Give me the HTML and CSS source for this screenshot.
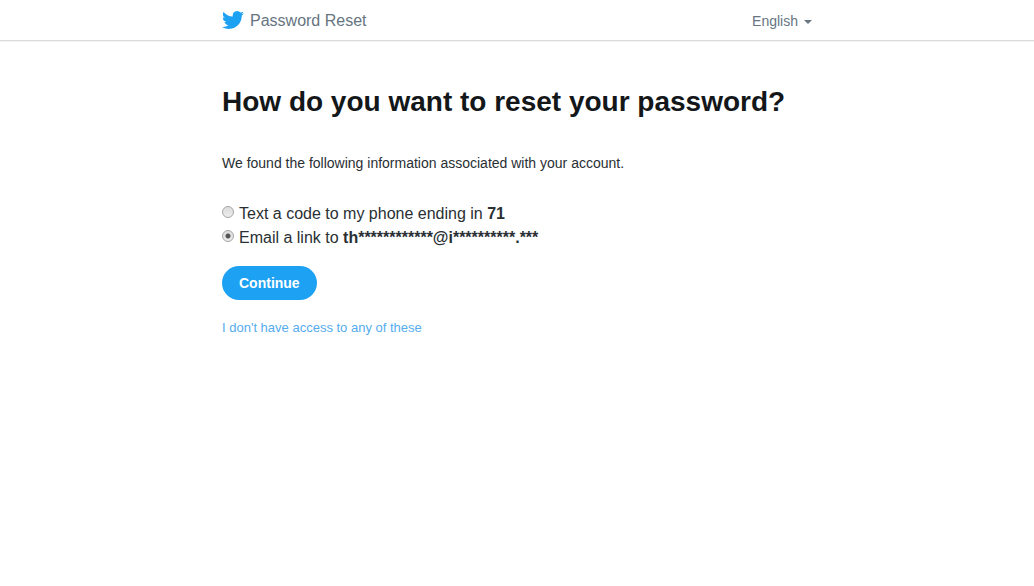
FILE: index.html
```html
<!DOCTYPE html>
<html lang="en">
<head>
<meta charset="utf-8">
<meta name="viewport" content="width=device-width, initial-scale=1">
<title>Password Reset</title>
<link rel="stylesheet" href="styles.css">
</head>
<body>
<header class="topbar">
  <div class="container topbar-inner">
    <div class="brand">
      <svg class="bird" viewBox="0 0 24 24" aria-hidden="true"><path d="M23.954 4.569a10 10 0 0 1-2.825.775 4.958 4.958 0 0 0 2.163-2.723c-.951.555-2.005.959-3.127 1.184a4.92 4.92 0 0 0-8.384 4.482C7.691 8.094 4.066 6.13 1.64 3.161a4.822 4.822 0 0 0-.666 2.475c0 1.71.87 3.213 2.188 4.096a4.904 4.904 0 0 1-2.228-.616v.061a4.923 4.923 0 0 0 3.946 4.827 4.996 4.996 0 0 1-2.212.085 4.937 4.937 0 0 0 4.604 3.417 9.868 9.868 0 0 1-6.102 2.105c-.39 0-.779-.023-1.17-.067a13.995 13.995 0 0 0 7.557 2.209c9.054 0 13.999-7.496 13.999-13.986 0-.209 0-.42-.015-.63a9.936 9.936 0 0 0 2.46-2.548z"/></svg>
      <span class="brand-title">Password Reset</span>
    </div>
    <button type="button" class="language" aria-haspopup="true">English<span class="caret"></span></button>
  </div>
</header>
<main class="container content">
  <h1 class="heading">How do you want to reset your password?</h1>
  <p class="intro">We found the following information associated with your account.</p>
  <form class="reset-form">
    <div class="options">
      <label class="option"><input class="radio" type="radio" name="method" value="phone"><span>Text a code to my phone ending in <strong>71</strong></span></label>
      <label class="option"><input class="radio" type="radio" name="method" value="email" checked><span>Email a link to <strong>th************@i**********.***</strong></span></label>
    </div>
    <button type="submit" class="continue">Continue</button>
  </form>
  <a class="no-access" href="#">I don't have access to any of these</a>
</main>
</body>
</html>
```
FILE: styles.css
```css
* {
  box-sizing: border-box;
}

body {
  margin: 0;
  background: #fff;
  color: #292f33;
  font-family: "Liberation Sans", Arial, sans-serif;
  font-size: 14px;
}

.container {
  width: 100%;
  max-width: 590px;
  margin: 0 auto;
}

.topbar {
  border-bottom: 1px solid #dadada;
  box-shadow: 0 1px 1px rgba(0, 0, 0, 0.04);
}

.topbar-inner {
  display: flex;
  align-items: center;
  justify-content: space-between;
  height: 40px;
}

.brand {
  display: flex;
  align-items: center;
  gap: 6px;
}

.bird {
  width: 22px;
  height: 22px;
  fill: #1da1f2;
}

.brand-title {
  padding-top: 2px;
  color: #66757f;
  font-size: 16px;
  line-height: 20px;
}

.language {
  display: flex;
  align-items: center;
  gap: 6px;
  padding: 2px 0 0;
  border: 0;
  background: none;
  color: #66757f;
  font: inherit;
}

.caret {
  margin-top: 2px;
  border: 4px solid transparent;
  border-top-color: #66757f;
  border-bottom: 0;
}

.content {
  padding-top: 44px;
}

.heading {
  margin: 0;
  color: #14171a;
  font-size: 28px;
  line-height: 34px;
}

.intro {
  margin: 35px 0 0;
  line-height: 18px;
}

.options {
  margin: 30px 0 16px;
}

.option {
  display: flex;
  align-items: center;
  gap: 5px;
  font-size: 16px;
  line-height: 24px;
}

.radio {
  appearance: none;
  flex: none;
  width: 12px;
  height: 12px;
  margin: 0 0 4px;
  border: 1px solid #a6a6a6;
  border-radius: 50%;
  background: linear-gradient(#dcdcdc, #ececec);
}

.radio:checked {
  background: radial-gradient(circle, #555 0 2px, transparent 3px), linear-gradient(#dcdcdc, #ececec);
}

.continue {
  display: block;
  height: 34px;
  padding: 0 17px;
  border: 0;
  border-radius: 17px;
  background: #1da1f2;
  color: #fff;
  font: bold 14px "Liberation Sans", Arial, sans-serif;
}

.no-access {
  display: inline-block;
  margin-top: 20px;
  color: #55acee;
  font-size: 13px;
  line-height: 16px;
  text-decoration: none;
}
```
